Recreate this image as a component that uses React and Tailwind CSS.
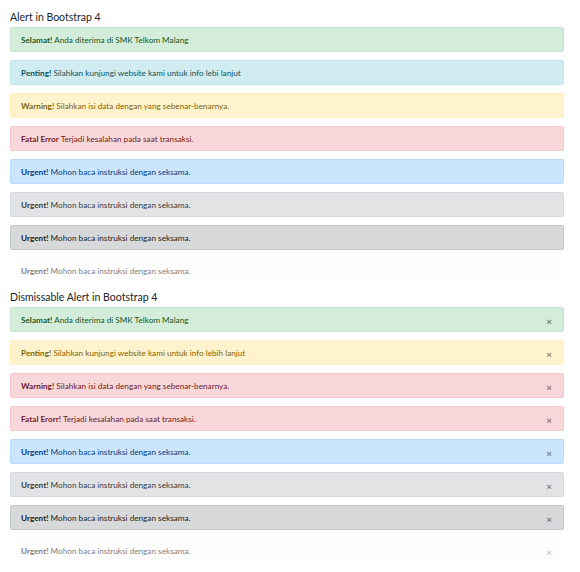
const alerts = [
  { strong: "Selamat!", text: "Anda diterima di SMK Telkom Malang", cls: "bg-[#d4edda] border-[#c3e6cb] text-[#155724]" },
  { strong: "Penting!", text: "Silahkan kunjungi website kami untuk info lebi lanjut", cls: "bg-[#d1ecf1] border-[#bee5eb] text-[#0c5460]" },
  { strong: "Warning!", text: "Silahkan isi data dengan yang sebenar-benarnya.", cls: "bg-[#fff3cd] border-[#ffeeba] text-[#856404]" },
  { strong: "Fatal Error", text: "Terjadi kesalahan pada saat transaksi.", cls: "bg-[#f8d7da] border-[#f5c6cb] text-[#721c24]" },
  { strong: "Urgent!", text: "Mohon baca instruksi dengan seksama.", cls: "bg-[#cce5ff] border-[#b8daff] text-[#004085]" },
  { strong: "Urgent!", text: "Mohon baca instruksi dengan seksama.", cls: "bg-[#e2e3e5] border-[#d6d8db] text-[#383d41]" },
  { strong: "Urgent!", text: "Mohon baca instruksi dengan seksama.", cls: "bg-[#d6d8d9] border-[#c6c8ca] text-[#1b1e21]" },
  { strong: "Urgent!", text: "Mohon baca instruksi dengan seksama.", cls: "bg-[#fefefe] border-[#fdfdfe] text-[#818182]", light: true },
];

const dismissable = [
  { strong: "Selamat!", text: "Anda diterima di SMK Telkom Malang", cls: "bg-[#d4edda] border-[#c3e6cb] text-[#155724]" },
  { strong: "Penting!", text: "Silahkan kunjungi website kami untuk info lebih lanjut", cls: "bg-[#fff3cd] border-[#ffeeba] text-[#856404]" },
  { strong: "Warning!", text: "Silahkan isi data dengan yang sebenar-benarnya.", cls: "bg-[#f8d7da] border-[#f5c6cb] text-[#721c24]" },
  { strong: "Fatal Erorr!", text: "Terjadi kesalahan pada saat transaksi.", cls: "bg-[#f8d7da] border-[#f5c6cb] text-[#721c24]" },
  { strong: "Urgent!", text: "Mohon baca instruksi dengan seksama.", cls: "bg-[#cce5ff] border-[#b8daff] text-[#004085]" },
  { strong: "Urgent!", text: "Mohon baca instruksi dengan seksama.", cls: "bg-[#e2e3e5] border-[#d6d8db] text-[#383d41]" },
  { strong: "Urgent!", text: "Mohon baca instruksi dengan seksama.", cls: "bg-[#d6d8d9] border-[#c6c8ca] text-[#1b1e21]" },
  { strong: "Urgent!", text: "Mohon baca instruksi dengan seksama.", cls: "bg-[#fefefe] border-[#fdfdfe] text-[#818182]", light: true },
];

function Alert({ a, close }) {
  return (
    <div className={`flex items-center justify-between h-[25px] border rounded-[2px] pl-[10px] pr-[11px] mb-[8px] text-[8.2px] leading-[11px] ${a.cls}`}>
      <div className="pt-[1px]">
        <strong className="font-bold">{a.strong}</strong> {a.text}
      </div>
      {close && (
        <span className={`font-bold text-[10px] leading-[11px] h-[11px] mt-[3px] ${a.light ? "text-black/25" : "text-black/50"}`}>×</span>
      )}
    </div>
  );
}

export default function App() {
  return (
    <div className="w-[580px] h-[572px] bg-white overflow-hidden" style={{ fontFamily: 'Lato, "Noto Sans", sans-serif' }}>
      <div className="mx-[10px] w-[554px] h-[3px] bg-[#fefefe]" />
      <div className="pl-[10px] w-[564px]">
        <h5 className="text-[10.5px] leading-[12px] text-[#212529] mt-[8px] mb-[4px]">Alert in Bootstrap 4</h5>
        {alerts.map((a, i) => <Alert key={i} a={a} />)}
        <h5 className="text-[10.5px] leading-[12px] text-[#212529] mb-[4px]">Dismissable Alert in Bootstrap 4</h5>
        {dismissable.map((a, i) => <Alert key={i} a={a} close />)}
      </div>
    </div>
  );
}
